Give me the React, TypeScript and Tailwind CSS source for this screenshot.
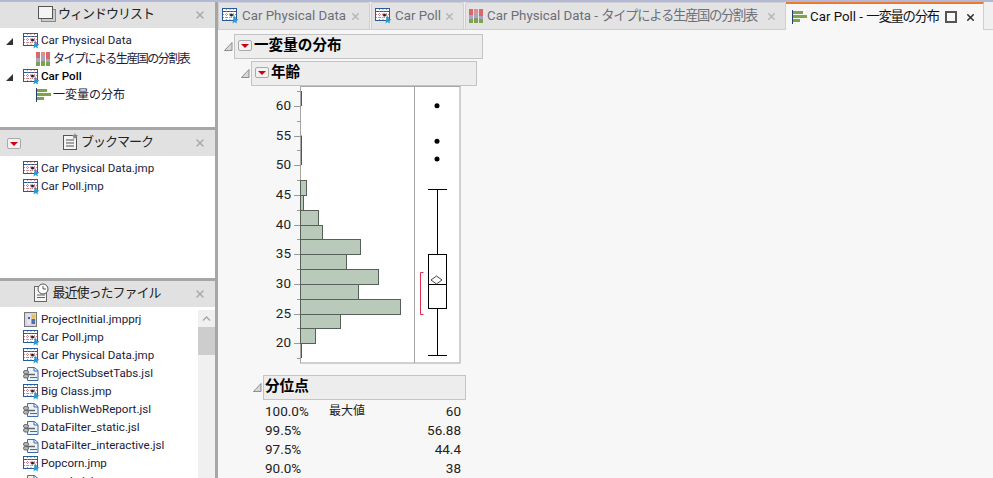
import { X } from "lucide-react";

const TEXT_FONT = "font-['Roboto','Noto_Sans_CJK_JP',sans-serif]";

/* ── small drawn icons ── */
function TableIcon() {
  return (
    <svg width="17" height="16" viewBox="0 0 17 16" className="shrink-0">
      <rect x="0.500" y="0.500" width="14" height="12" fill="#fff" stroke="#2a5a9a" />
      <path d="M1 3.500h13" stroke="#2a5a9a" />
      <path d="M1 6.500h13M1 9.500h13M4.500 1v11M8 1v11M11.500 1v11" stroke="#c26a7a" strokeWidth="0.800" strokeDasharray="1 1" />
      <circle cx="9.500" cy="7" r="1.500" fill="#222" />
      <path d="M12 7l2 4 2.500 .5-2 1.500 .5 2.500-2.500-1.500-2 1.500 .5-3z" fill="#2a9ad6" />
    </svg>
  );
}

function MosaicIcon() {
  return (
    <svg width="15" height="14" viewBox="0 0 15 14" className="shrink-0">
      <rect x="0" y="0" width="4" height="6" fill="#d9686a" />
      <rect x="0" y="6" width="4" height="4" fill="#a9a3c4" />
      <rect x="0" y="10" width="4" height="4" fill="#7ea34d" />
      <rect x="5" y="0" width="4" height="4" fill="#e58b8b" />
      <rect x="5" y="4" width="4" height="5" fill="#a9a3c4" />
      <rect x="5" y="9" width="4" height="5" fill="#7ea34d" />
      <rect x="10" y="0" width="4" height="7" fill="#d9686a" />
      <rect x="10" y="7" width="4" height="3" fill="#a9a3c4" />
      <rect x="10" y="10" width="4" height="4" fill="#7ea34d" />
    </svg>
  );
}

function DistIcon() {
  return (
    <svg width="16" height="14" viewBox="0 0 16 14" className="shrink-0">
      <path d="M0.500 0v14" stroke="#26406e" />
      <rect x="1" y="1" width="10" height="3" fill="#7ea34d" />
      <rect x="1" y="5" width="14" height="3" fill="#7ea34d" />
      <rect x="1" y="9" width="7" height="3" fill="#7ea34d" />
    </svg>
  );
}

function ScriptIcon() {
  return (
    <svg width="16" height="15" viewBox="0 0 16 15" className="shrink-0">
      <path d="M4.500 .5h7l3.500 3v10h-10.500z" fill="#eaf2fa" stroke="#3f6ea8" />
      <path d="M11 1v3h4M7 10.500h7" fill="none" stroke="#3f6ea8" />
      <path d="M3 7.500h9" stroke="#666" strokeWidth="1.500" />
      <rect x="0.500" y="3.500" width="5" height="3.500" rx="1.700" fill="#b4b4b4" stroke="#666" />
      <rect x="0.500" y="7.500" width="5" height="3.500" rx="1.700" fill="#b4b4b4" stroke="#666" />
    </svg>
  );
}

function ProjectIcon() {
  return (
    <svg width="16" height="16" viewBox="0 0 16 16" className="shrink-0">
      <rect x="1.500" y="0.500" width="12" height="14" fill="#d8d4e4" stroke="#777" />
      <rect x="4" y="2.500" width="4" height="10" fill="#e9e4f2" />
      <rect x="8.500" y="2.500" width="3.500" height="4" fill="#f0c040" />
      <rect x="8.500" y="7" width="3.500" height="5" fill="#4a70b0" />
      <circle cx="6" cy="6" r="1.200" fill="#3a62a8" />
    </svg>
  );
}

function DisclosureDown() {
  return (
    <svg width="9" height="9" viewBox="0 0 9 9" className="shrink-0">
      <path d="M8 1v7H1z" fill="#333" />
    </svg>
  );
}

function OutlineTriangle() {
  return (
    <svg width="9" height="9" viewBox="0 0 9 9" className="shrink-0">
      <path d="M8 .5v8H.5z" fill="#d8d8d8" stroke="#777" strokeWidth="0.800" />
    </svg>
  );
}

function RedMenu({ className }: { className?: string }) {
  return (
    <span className={`flex h-[11px] w-[14px] shrink-0 items-center justify-center rounded-[2px] border border-[#a9a9a9] bg-[#f2f2f2] ${className ?? ""}`}>
      <svg width="8" height="4" viewBox="0 0 8 4">
        <path d="M0 0h8L4 4z" fill="#d00010" />
      </svg>
    </span>
  );
}

/* ── sidebar ── */
function PanelHeader({ title, icon, menu, shift }: { title: string; icon: React.ReactNode; menu?: boolean; shift?: string }) {
  return (
    <div className={`relative flex h-[26px] items-center justify-center gap-px bg-[#e1e1e1] pb-[2px] text-[13px] tracking-[-1px] text-[#222] ${shift ?? ""}`}>
      {menu && <RedMenu className="absolute left-[7px] top-[8px]" />}
      {icon}
      <span>{title}</span>
      <X size={12} strokeWidth={3} className="absolute right-[9px] top-[7px] text-[#a9a9a9]" />
    </div>
  );
}

function FileRow({ icon, name }: { icon: React.ReactNode; name: string }) {
  return (
    <div className="flex h-[18px] items-center gap-px pl-[23px] text-[11.600px] text-[#1b1b3a]">
      <span className="flex w-[17px] shrink-0 items-center">{icon}</span>
      <span className="whitespace-nowrap">{name}</span>
    </div>
  );
}

function Sidebar() {
  const recent: [React.ReactNode, string][] = [
    [<ProjectIcon />, "ProjectInitial.jmpprj"],
    [<TableIcon />, "Car Poll.jmp"],
    [<TableIcon />, "Car Physical Data.jmp"],
    [<ScriptIcon />, "ProjectSubsetTabs.jsl"],
    [<TableIcon />, "Big Class.jmp"],
    [<ScriptIcon />, "PublishWebReport.jsl"],
    [<ScriptIcon />, "DataFilter_static.jsl"],
    [<ScriptIcon />, "DataFilter_interactive.jsl"],
    [<TableIcon />, "Popcorn.jmp"],
    [<ScriptIcon />, "sample.jsl"],
  ];

  return (
    <aside className="flex w-[218px] shrink-0 flex-col border-r-[3px] border-[#a6a6a6] bg-white">
      <PanelHeader
        title="ウィンドウリスト"
        shift="pr-[23px]"
        icon={
          <svg width="19" height="17" viewBox="0 0 19 17">
            <rect x="3.500" y="3.500" width="14" height="12" fill="#ccc" stroke="#888" />
            <rect x="0.500" y="0.500" width="14" height="12" fill="#f4f4f4" stroke="#555" />
          </svg>
        }
      />
      <div className="h-[99px] pt-[4px]">
        <div className="flex h-[18px] items-center pl-[5px] text-[11.600px] text-[#1b1b3a]">
          <DisclosureDown />
          <span className="ml-[9px] mr-px"><TableIcon /></span>
          <span>Car Physical Data</span>
        </div>
        <div className="flex h-[18px] items-center gap-px pl-[36px] text-[12px] text-[#1b1b3a]">
          <MosaicIcon />
          <span className="ml-px tracking-[-1.500px]">タイプによる生産国の分割表</span>
        </div>
        <div className="flex h-[18px] items-center pl-[5px] text-[11.600px] font-medium text-black">
          <DisclosureDown />
          <span className="ml-[9px] mr-px"><TableIcon /></span>
          <span>Car Poll</span>
        </div>
        <div className="flex h-[18px] items-center gap-px pl-[36px] text-[12px] text-[#1b1b3a]">
          <DistIcon />
          <span>一変量の分布</span>
        </div>
      </div>
      <div className="h-[3px] bg-[#a6a6a6]" />
      <PanelHeader
        title="ブックマーク"
        menu
        icon={
          <svg width="18" height="18" viewBox="0 0 18 18">
            <rect x="1.500" y="2.500" width="13" height="14" fill="#f4f4f4" stroke="#555" />
            <path d="M4 7h8M4 10h8M4 13h8" stroke="#555" />
            <path d="M13 0l1 2 2 .5-1.500 1.500 .5 2-2-1-2 1 .5-2L10 2.500l2-.5z" fill="#888" />
          </svg>
        }
      />
      <div className="h-[122px] pt-[4px]">
        <FileRow icon={<TableIcon />} name="Car Physical Data.jmp" />
        <FileRow icon={<TableIcon />} name="Car Poll.jmp" />
      </div>
      <div className="h-[3px] bg-[#a6a6a6]" />
      <PanelHeader
        title="最近使ったファイル"
        shift="pr-[21px]"
        icon={
          <svg width="18" height="20" viewBox="0 0 18 20">
            <rect x="1.500" y="3.500" width="12" height="15" fill="#f4f4f4" stroke="#666" />
            <path d="M4 12h8M4 14.500h8" stroke="#666" />
            <circle cx="10" cy="6" r="5" fill="#fff" stroke="#555" />
            <path d="M10 3v3h3" fill="none" stroke="#555" />
          </svg>
        }
      />
      <div className="flex min-h-0 flex-1 pt-[3px]">
        <div className="min-w-0 flex-1 overflow-hidden pt-[1px]">
          {recent.map(([icon, name]) => (
            <FileRow key={name} icon={icon} name={name} />
          ))}
        </div>
        <div className="w-[17px] shrink-0 bg-[#f0f0f0]">
          <div className="flex h-[17px] items-center justify-center">
            <svg width="9" height="5" viewBox="0 0 9 5">
              <path d="M1 4.500l3.500-3.500 3.500 3.500" fill="none" stroke="#a6a6a6" strokeWidth="1.300" />
            </svg>
          </div>
          <div className="h-[28px] bg-[#cdcdcd]" />
        </div>
      </div>
    </aside>
  );
}

/* ── tabs ── */
function Tab({ icon, label, jp, width }: { icon: React.ReactNode; label: string; jp?: string; width: string }) {
  return (
    <div className={`flex h-[27px] shrink-0 items-center gap-[3px] rounded-t-[2px] border border-b-0 border-[#cfcfcf] bg-[#e3e3e3] pl-[3px] text-[13.300px] text-[#6e6e78] ${width}`}>
      {icon}
      <span className="whitespace-nowrap">
        {label}
        {jp && <span className="tracking-[-1.300px]">{jp}</span>}
      </span>
      <X size={11} strokeWidth={3} className="ml-auto mr-[8px] text-[#b4b4b4]" />
    </div>
  );
}

function TabBar() {
  return (
    <div className="flex h-[28px] items-end gap-px border-b border-[#cfcfcf] bg-[#f0f0f0]">
      <Tab icon={<TableIcon />} label="Car Physical Data" width="w-[152px]" />
      <Tab icon={<TableIcon />} label="Car Poll" width="w-[93px]" />
      <Tab icon={<MosaicIcon />} label="Car Physical Data - " jp="タイプによる生産国の分割表" width="w-[321px]" />
      <div className="-mb-px -ml-px flex h-[28px] w-[198px] shrink-0 items-center gap-[2px] border-r border-t-[2px] border-[#cfcfcf] border-t-[#f07a2c] bg-[#f7f7f7] pl-[6px] text-[13.300px] text-[#111]">
        <DistIcon />
        <span className="whitespace-nowrap">
          Car Poll - <span className="tracking-[-1.200px]">一変量の分布</span>
        </span>
        <span className="ml-auto h-[12px] w-[12px] border-2 border-[#555]" />
        <X size={11} strokeWidth={3.500} className="ml-[6px] mr-[7px] text-[#333]" />
      </div>
    </div>
  );
}

/* ── chart ── */
const BARS = [
  { top: 180.500, bottom: 195.500, right: 306.500 },
  { top: 195.500, bottom: 210.500, right: 303.500 },
  { top: 210.500, bottom: 225.500, right: 318.500 },
  { top: 225.500, bottom: 239.500, right: 322.500 },
  { top: 239.500, bottom: 254.500, right: 360.500 },
  { top: 254.500, bottom: 269.500, right: 346.500 },
  { top: 269.500, bottom: 284.500, right: 378.500 },
  { top: 284.500, bottom: 299.500, right: 358.500 },
  { top: 299.500, bottom: 314.500, right: 400.500 },
  { top: 314.500, bottom: 328.500, right: 340.500 },
  { top: 328.500, bottom: 343.500, right: 315.500 },
];

const TICKS = [60, 55, 50, 45, 40, 35, 30, 25, 20];

function tickY(v: number) {
  return Math.round(106 + ((60 - v) / 5) * 29.650) + 0.500;
}

function DistributionChart() {
  // drawn in page pixels, the svg's own corner sits at x 262, y 85
  return (
    <svg width="200" height="280" viewBox="262 85 200 280" className={`block ${TEXT_FONT}`}>
      <rect x="300.500" y="86.500" width="159.500" height="276.500" fill="#fff" stroke="#a6a6a6" />
      <path d="M414.500 86v277" stroke="#a6a6a6" />
      {TICKS.map(v => (
        <g key={v}>
          <path d={`M294 ${tickY(v)}h7`} stroke="#999" />
          <path d={`M297 ${tickY(v - 2.500)}h4`} stroke="#999" />
          <text x="291" y={tickY(v) + 3.500} textAnchor="end" fontSize="13.500" fill="#222">{v}</text>
        </g>
      ))}
      <path d="M297 91.500h4" stroke="#999" />
      <path d="M301.500 91v15M301.500 135.500v29.500M301.500 343v15" stroke="#555" />
      {BARS.map(b => (
        <rect key={b.top} x="300.500" y={b.top} width={b.right - 300.500} height={b.bottom - b.top} fill="#b9c9ba" stroke="#566058" />
      ))}
      <circle cx="437" cy="105.700" r="2.500" fill="#000" />
      <circle cx="437" cy="141.300" r="2.500" fill="#000" />
      <circle cx="437" cy="159" r="2.500" fill="#000" />
      <path d="M428 189.500h19M437.500 189.500v65M437.500 308v47.500M428 355.500h19" stroke="#000" />
      <rect x="428.500" y="254.500" width="18" height="54" fill="none" stroke="#000" />
      <path d="M428.500 284.500h18" stroke="#000" />
      <path d="M431 280l5.500-4 5.500 4-5.500 4z" fill="#fff" stroke="#444" />
      <path d="M423.500 272.500h-3v42h3" fill="none" stroke="#e8294a" />
    </svg>
  );
}

/* ── report ── */
const QUANTILES = [
  { pct: "100.0%", label: "最大値", value: "60" },
  { pct: "99.5%", label: "", value: "56.88" },
  { pct: "97.5%", label: "", value: "44.4" },
  { pct: "90.0%", label: "", value: "38" },
];

function Report() {
  return (
    <div className="min-h-0 flex-1 overflow-hidden bg-[#f7f7f7] pl-[6px] pt-[4px]">
      <div className="flex items-center gap-px">
        <OutlineTriangle />
        <div className="flex h-[25px] w-[249px] items-center gap-[2px] border border-[#c4c4c4] bg-[#ededed] pb-[2px] pl-[3px] text-[14.600px] font-bold text-black">
          <RedMenu />
          <span>一変量の分布</span>
        </div>
      </div>
      <div className="ml-[17px] mt-[2px]">
        <div className="flex items-center gap-px">
          <OutlineTriangle />
          <div className="flex h-[25px] w-[226px] items-center gap-[2px] border border-[#c4c4c4] bg-[#ededed] pb-[2px] pl-[3px] text-[14.600px] font-bold text-black">
            <RedMenu />
            <span>年齢</span>
          </div>
        </div>
        <div className="-mt-px ml-[21px] h-[280px] w-[200px]">
          <DistributionChart />
        </div>
        <div className="ml-[12px] mt-[10px]">
          <div className="flex items-center gap-px">
            <OutlineTriangle />
            <div className="flex h-[25px] w-[203px] items-center border border-[#c4c4c4] bg-[#ededed] pb-[2px] pl-px text-[14.600px] font-bold text-black">
              分位点
            </div>
          </div>
          <div className="ml-[12px] mt-[2px] w-[196px] text-[13.500px] text-[#222]">
            {QUANTILES.map(q => (
              <div key={q.pct} className="flex h-[18.800px] items-center">
                <span className="w-[64px]">{q.pct}</span>
                <span className="text-[12px]">{q.label}</span>
                <span className="ml-auto">{q.value}</span>
              </div>
            ))}
          </div>
        </div>
      </div>
    </div>
  );
}

export default function App() {
  return (
    <div className={`flex h-[478px] w-[993px] flex-col overflow-hidden bg-[#f0f0f0] ${TEXT_FONT}`}>
      <div className="h-[2px] shrink-0 bg-[#b4b8d8]" />
      <div className="flex min-h-0 flex-1">
        <Sidebar />
        <main className="flex min-w-0 flex-1 flex-col">
          <TabBar />
          <Report />
        </main>
      </div>
    </div>
  );
}
